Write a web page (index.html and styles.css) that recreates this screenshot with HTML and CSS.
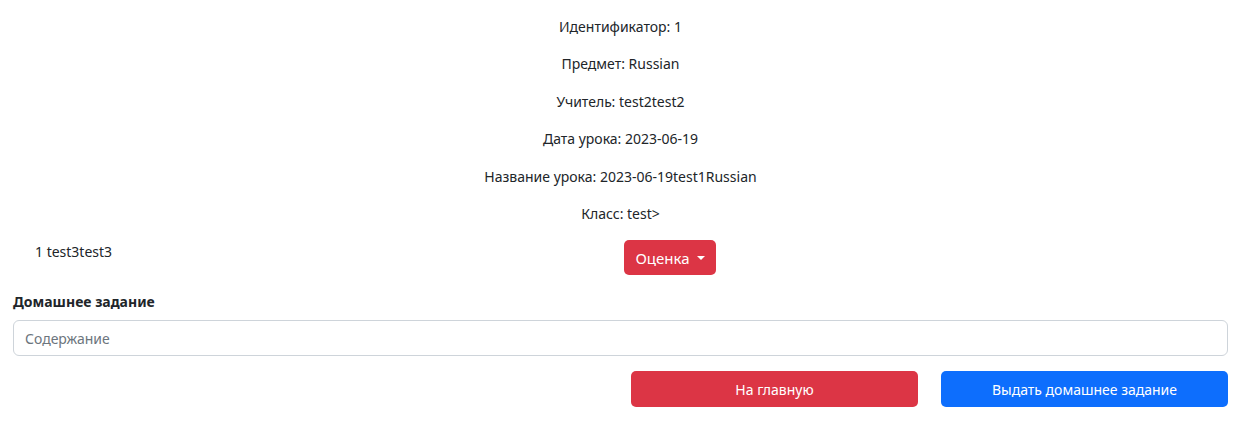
FILE: index.html
```html
<!DOCTYPE html>
<html lang="ru">
<head>
<meta charset="utf-8">
<link rel="stylesheet" href="styles.css">
</head>
<body>
<div class="page">
  <div class="info">
    <p>Идентификатор: 1</p>
    <p>Предмет: Russian</p>
    <p>Учитель: test2test2</p>
    <p>Дата урока: 2023-06-19</p>
    <p>Название урока: 2023-06-19test1Russian</p>
    <p>Класс: test&gt;</p>
  </div>
  <div class="student-row">
    <div class="student">1 test3test3</div>
    <div class="grade-cell">
      <button class="btn btn-red dropdown">Оценка <span class="caret"></span></button>
    </div>
  </div>
  <div class="hw">
    <label class="hw-label">Домашнее задание</label>
    <input class="hw-input" type="text" placeholder="Содержание">
  </div>
  <div class="actions">
    <button class="btn btn-red wide">На главную</button>
    <button class="btn btn-blue wide">Выдать домашнее задание</button>
  </div>
</div>
</body>
</html>
```
FILE: styles.css
```css
html, body {
  margin: 0;
  padding: 0;
  background: #fff;
}
body {
  font-family: "Noto Sans", "Open Sans", sans-serif;
  font-size: 14px;
  color: #212529;
}
.page {
  padding: 16px 24px 0 13px;
}
.info {
  text-align: center;
}
.info p {
  margin: 0 0 16.4px;
  line-height: 21px;
}
.student-row {
  display: grid;
  grid-template-columns: 611px 1fr;
  align-items: start;
  margin-top: 2px;
}
.student {
  padding-left: 22px;
  padding-top: 1px;
  line-height: 21px;
}
.grade-cell {
  padding-top: 0;
}
.btn {
  border: none;
  border-radius: 5px;
  color: #fff;
  font-family: inherit;
  font-size: 15px;
  cursor: pointer;
}
.btn-red { background: #dc3545; }
.btn-blue { background: #0d6efd; }
.dropdown {
  height: 35px;
  width: 92px;
  padding: 0;
  display: inline-flex;
  align-items: center;
  justify-content: center;
  gap: 7px;
}
.caret {
  width: 0;
  height: 0;
  border-left: 4px solid transparent;
  border-right: 4px solid transparent;
  border-top: 4px solid #fff;
  margin-top: 1px;
}
.hw {
  margin-top: 16px;
  display: flex;
  flex-direction: column;
}
.hw-label {
  font-weight: 700;
  line-height: 21px;
  margin-bottom: 8px;
}
.hw-input {
  height: 36px;
  box-sizing: border-box;
  border: 1px solid #ced4da;
  border-radius: 6px;
  padding: 0 11px;
  font-family: inherit;
  font-size: 14px;
  color: #212529;
  outline: none;
}
.hw-input::placeholder {
  color: #6c757d;
}
.actions {
  display: flex;
  justify-content: flex-end;
  gap: 23px;
  margin-top: 15px;
}
.wide {
  width: 287px;
  height: 36px;
  font-size: 14px;
  padding: 0;
}
```
